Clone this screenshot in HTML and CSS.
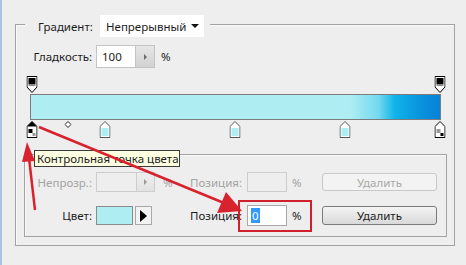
FILE: index.html
```html
<!DOCTYPE html>
<html lang="ru">
<head>
    <meta charset="UTF-8">
    <title>Редактор градиентов</title>
    <link rel="stylesheet" href="styles.css">
</head>
<body>
<div class="window">
    <div class="group outer">
        <div class="group-head">
            <span class="head-label">Градиент:</span>
            <div class="dropdown"><span class="dropdown-text">Непрерывный</span><span class="caret"></span></div>
        </div>

        <div class="row smooth">
            <span class="lbl">Гладкость:</span>
            <div class="spin">
                <span class="spin-val">100</span>
                <span class="spin-btn"><span class="tri"></span></span>
            </div>
            <span class="unit">%</span>
        </div>

        <div class="editor">
            <div class="stops top">
                <svg class="stop" style="left: 0%" width="11" height="17" viewBox="0 0 11 17">
                    <path d="M0.5 0.5 H10.5 V11 L5.5 16.5 L0.5 11 Z" fill="#fff" stroke="#000"/>
                    <rect x="2" y="2" width="7" height="6" fill="#000"/>
                    <rect x="2" y="8" width="7" height="2" fill="#8a8a8a"/>
                </svg>
                <svg class="stop" style="left: 100%" width="11" height="17" viewBox="0 0 11 17">
                    <path d="M0.5 0.5 H10.5 V11 L5.5 16.5 L0.5 11 Z" fill="#fff" stroke="#000"/>
                    <rect x="2" y="2" width="7" height="6" fill="#000"/>
                    <rect x="2" y="8" width="7" height="2" fill="#8a8a8a"/>
                </svg>
            </div>
            <div class="bar"></div>
            <div class="stops bottom">
                <!-- selected stop -->
                <svg class="stop" style="left: 0%" width="11" height="17" viewBox="0 0 11 17">
                    <path d="M5.5 0.5 L10.5 5.5 V16.5 H0.5 V5.5 Z" fill="#fff" stroke="#000"/>
                    <path d="M5.5 0.5 L10.5 5.5 H0.5 Z" fill="#000"/>
                    <rect x="2" y="8" width="4" height="4" fill="#000"/>
                    <rect x="6" y="12" width="3" height="3" fill="#9a9a9a"/>
                </svg>
                <svg class="mid" style="left: 8.9%" width="7" height="7" viewBox="0 0 7 7">
                    <path d="M3.5 0.5 L6.5 3.5 L3.5 6.5 L0.5 3.5 Z" fill="#fff" stroke="#222"/>
                </svg>
                <svg class="stop" style="left: 18%" width="11" height="17" viewBox="0 0 11 17">
                    <path d="M5.5 0.5 L10.5 5.5 V16.5 H0.5 V5.5 Z" fill="#fff" stroke="#555"/>
                    <rect x="2" y="7" width="7" height="8" fill="#aeeef2"/>
                </svg>
                <svg class="stop" style="left: 49.8%" width="11" height="17" viewBox="0 0 11 17">
                    <path d="M5.5 0.5 L10.5 5.5 V16.5 H0.5 V5.5 Z" fill="#fff" stroke="#555"/>
                    <rect x="2" y="7" width="7" height="8" fill="#aeeef2"/>
                </svg>
                <svg class="stop" style="left: 76.6%" width="11" height="17" viewBox="0 0 11 17">
                    <path d="M5.5 0.5 L10.5 5.5 V16.5 H0.5 V5.5 Z" fill="#fff" stroke="#555"/>
                    <rect x="2" y="7" width="7" height="8" fill="#aeeef2"/>
                </svg>
                <svg class="stop" style="left: 100%" width="11" height="17" viewBox="0 0 11 17">
                    <path d="M5.5 0.5 L10.5 5.5 V16.5 H0.5 V5.5 Z" fill="#fff" stroke="#000"/>
                    <rect x="2" y="8" width="4" height="4" fill="#9a9a9a"/>
                    <rect x="6" y="12" width="3" height="3" fill="#000"/>
                </svg>
            </div>
        </div>

        <div class="group inner">
            <div class="row disabled">
                <span class="lbl">Непрозр.:</span>
                <div class="spin small">
                    <span class="spin-val"></span>
                    <span class="spin-btn"><span class="tri"></span></span>
                </div>
                <span class="unit">%</span>
                <span class="lbl2">Позиция:</span>
                <div class="field"></div>
                <span class="unit2">%</span>
                <button class="btn" disabled>Удалить</button>
            </div>
            <div class="row color-row">
                <span class="lbl">Цвет:</span>
                <div class="color-ctrl">
                    <span class="swatch"></span>
                    <span class="pick"><span class="tri-big"></span></span>
                </div>
                <span class="unit"></span>
                <span class="lbl2">Позиция:</span>
                <div class="field active"><span class="sel">0</span></div>
                <span class="unit2">%</span>
                <button class="btn">Удалить</button>
            </div>
        </div>
    </div>

    <div class="tooltip">Контрольная точка цвета</div>

    <!-- red annotations drawn over the dialog -->
    <svg class="marks" width="466" height="265" viewBox="0 0 466 265">
        <line x1="37" y1="127" x2="222" y2="203" stroke="#d8232e" stroke-width="2.5"/>
        <polygon points="240,211 215,213 224,192" fill="#d8232e"/>
        <line x1="33" y1="210" x2="27" y2="158" stroke="#d8232e" stroke-width="2.5"/>
        <polygon points="25,142 33,161 20,162" fill="#d8232e"/>
        <rect x="237" y="201" width="72" height="30" fill="none" stroke="#d01f2d" stroke-width="2"/>
    </svg>

    <span class="grip"></span>
</div>
</body>
</html>
```

FILE: styles.css
```css
body {
    margin: 0;
    background-color: #eeeeee;
    font-family: "Noto Sans", "Open Sans", sans-serif;
    font-size: 11.5px;
    color: #1c1c1c;
}

.window {
    position: relative;
    width: 466px;
    height: 265px;
    box-sizing: border-box;
    border-left: 2px solid #a9c4df;
    padding-top: 24px;
    padding-left: 13px;
    overflow: hidden;
}

.group {
    border: 1px solid #a2a2a2;
    box-shadow: inset 1px 1px 0 #fafafa;
    box-sizing: border-box;
}

.outer {
    width: 440px;
    padding-bottom: 8px;
}

.group-head {
    display: flex;
    align-items: center;
    width: fit-content;
    height: 22px;
    margin-top: -10px;
    margin-left: 9px;
    padding: 0 6px 0 13px;
    background-color: #eeeeee;
}

.head-label {
    width: 62px;
}

.dropdown {
    display: flex;
    align-items: center;
    width: 104px;
    height: 22px;
    box-sizing: border-box;
    padding: 0 5px 0 6px;
    background-color: #fff;
}

.dropdown-text {
    flex: 1;
}

.caret {
    width: 0;
    height: 0;
    border-left: 4px solid transparent;
    border-right: 4px solid transparent;
    border-top: 4px solid #111;
}

.row {
    display: flex;
    align-items: center;
}

.smooth {
    margin-top: 8px;
    height: 23px;
}

.smooth .lbl {
    width: 76px;
}

.lbl {
    width: 67px;
    margin-right: 4px;
    text-align: right;
}

.spin {
    display: flex;
    width: 59px;
    height: 23px;
    box-sizing: border-box;
    border: 1px solid #c4c4c4;
    background-color: #fff;
}

.spin-val {
    flex: 1;
    padding-left: 5px;
    line-height: 21px;
}

.spin-btn {
    display: flex;
    align-items: center;
    justify-content: center;
    width: 18px;
    border-left: 1px solid #c4c4c4;
    background: linear-gradient(#e6e6e6, #d2d2d2);
}

.tri {
    width: 0;
    height: 0;
    border-top: 3px solid transparent;
    border-bottom: 3px solid transparent;
    border-left: 3px solid #6a6a6a;
}

.unit {
    width: 35px;
    padding-left: 6px;
    box-sizing: border-box;
}

.editor {
    width: 411px;
    margin: 8px 0 0 14px;
}

.stops {
    position: relative;
    height: 17px;
    margin: 0 1px 0 2px;
}

.stops.top {
    height: 18px;
}

.stop {
    position: absolute;
    top: 0;
    transform: translateX(-50%);
}

.mid {
    position: absolute;
    top: 0;
    transform: translateX(-50%);
}

.bar {
    height: 26px;
    box-sizing: border-box;
    border: 1px solid #7c7c7c;
    background: linear-gradient(to right, #aeeef2 0%, #aeeef2 78%, #74d8f0 85%, #0fb4e9 89%, #0a94de 95%, #0681d8 100%);
}

.stops.bottom {
    margin-top: 1px;
}

.inner {
    width: 423px;
    margin: 16px 0 0 8px;
    padding: 17px 0 10px;
}

.inner .row {
    height: 20px;
}

.inner .color-row {
    height: 21px;
    margin-top: 13px;
}

.spin.small {
    height: 20px;
    background-color: #eeeeee;
    border-color: #cdcdcd;
}

.spin.small .spin-btn {
    width: 17px;
    border-left-color: #cdcdcd;
    background: linear-gradient(#eeeeee, #e2e2e2);
}

.spin.small .tri {
    border-left-color: #9a9a9a;
}

.inner .unit {
    padding-left: 8px;
}

.lbl2 {
    width: 52px;
    margin-right: 5px;
    text-align: right;
}

.field {
    width: 40px;
    height: 20px;
    box-sizing: border-box;
    border: 1px solid #cdcdcd;
    background-color: #eeeeee;
}

.field.active {
    height: 21px;
    border-color: #a8a8a8;
    background-color: #fff;
    padding: 2px 0 0 3px;
}

.sel {
    display: inline-block;
    padding: 0 1px;
    line-height: 15px;
    background-color: #3399ff;
    color: #fff;
}

.unit2 {
    width: 35px;
    padding-left: 5px;
    box-sizing: border-box;
}

.btn {
    width: 115px;
    height: 19px;
    padding: 0;
    font-family: inherit;
    font-size: 11.5px;
    color: #1c1c1c;
    border: 1px solid #7a7a7a;
    border-radius: 3px;
    background: linear-gradient(#f4f4f4, #d9d9d9);
}

.btn:disabled {
    height: 18px;
    color: #a8a8a8;
    border-color: #c8c8c8;
    background: #f3f3f3;
}

.disabled .lbl,
.disabled .lbl2,
.disabled .unit,
.disabled .unit2 {
    color: #a3a3a3;
}

.color-ctrl {
    display: flex;
    gap: 2px;
    width: 59px;
    height: 19px;
}

.swatch {
    width: 37px;
    box-sizing: border-box;
    border: 1px solid #8c8c8c;
    background-color: #aeeef2;
}

.pick {
    display: flex;
    align-items: center;
    justify-content: center;
    width: 17px;
    box-sizing: border-box;
    border: 1px solid #a8a8a8;
    background-color: #f2f2f2;
}

.tri-big {
    width: 0;
    height: 0;
    border-top: 6px solid transparent;
    border-bottom: 6px solid transparent;
    border-left: 7px solid #000;
}

.tooltip {
    position: absolute;
    left: 32px;
    top: 150px;
    width: 146px;
    height: 17px;
    box-sizing: border-box;
    padding-left: 2px;
    border: 1px solid #3a3a3a;
    background-color: #ffffe1;
    line-height: 15px;
    white-space: nowrap;
}

.marks {
    position: absolute;
    left: 0;
    top: 0;
    pointer-events: none;
}

.grip {
    position: absolute;
    right: 4px;
    bottom: 3px;
    width: 6px;
    height: 4px;
    background-image: radial-gradient(#c4c4c4 40%, transparent 45%);
    background-size: 2px 2px;
}
```
